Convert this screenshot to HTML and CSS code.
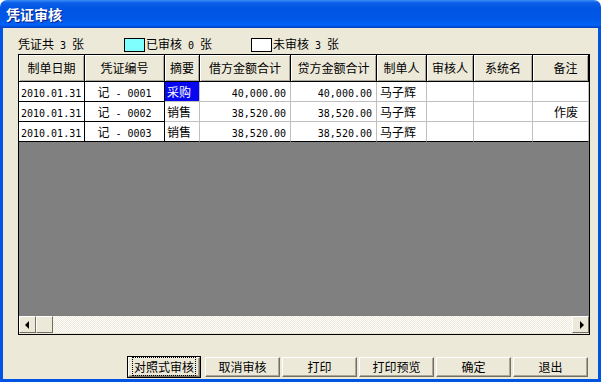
FILE: index.html
```html
<!DOCTYPE html>
<html lang="zh-CN">
<head>
  <meta charset="UTF-8">
  <title>凭证审核</title>
  <link rel="stylesheet" href="styles.css">
</head>
<body>
  <div class="window">
    <div class="titlebar">凭证审核</div>
    <div class="frame">
      <div class="summary">
        <span class="total">凭证共<span class="n"> 3 </span>张</span>
        <span class="legend"><i class="swatch done"></i><span>已审核<span class="n"> 0 </span>张</span></span>
        <span class="legend"><i class="swatch todo"></i><span>未审核<span class="n"> 3 </span>张</span></span>
      </div>

      <div class="grid">
        <div class="row head">
          <div class="c">制单日期</div>
          <div class="c">凭证编号</div>
          <div class="c">摘要</div>
          <div class="c">借方金额合计</div>
          <div class="c">贷方金额合计</div>
          <div class="c">制单人</div>
          <div class="c">审核人</div>
          <div class="c">系统名</div>
          <div class="c note">备注</div>
        </div>
        <div class="row">
          <div class="c fix"><span class="n">2010.01.31</span></div>
          <div class="c fix mid">记<span class="n"> - 0001</span></div>
          <div class="c sel">采购</div>
          <div class="c amt"><span class="n">40,000.00</span></div>
          <div class="c amt"><span class="n">40,000.00</span></div>
          <div class="c who">马子辉</div>
          <div class="c"></div>
          <div class="c"></div>
          <div class="c note"></div>
        </div>
        <div class="row">
          <div class="c fix"><span class="n">2010.01.31</span></div>
          <div class="c fix mid">记<span class="n"> - 0002</span></div>
          <div class="c">销售</div>
          <div class="c amt"><span class="n">38,520.00</span></div>
          <div class="c amt"><span class="n">38,520.00</span></div>
          <div class="c who">马子辉</div>
          <div class="c"></div>
          <div class="c"></div>
          <div class="c note">作废</div>
        </div>
        <div class="row last">
          <div class="c fix"><span class="n">2010.01.31</span></div>
          <div class="c fix mid">记<span class="n"> - 0003</span></div>
          <div class="c">销售</div>
          <div class="c amt"><span class="n">38,520.00</span></div>
          <div class="c amt"><span class="n">38,520.00</span></div>
          <div class="c who">马子辉</div>
          <div class="c"></div>
          <div class="c"></div>
          <div class="c note"></div>
        </div>
        <div class="empty"></div>
        <div class="hscroll">
          <div class="sbtn"><i class="arrow left"></i></div>
          <div class="thumb"></div>
          <div class="track"></div>
          <div class="sbtn"><i class="arrow right"></i></div>
        </div>
      </div>

      <div class="buttons">
        <button class="default"><span>对照式审核</span></button>
        <button>取消审核</button>
        <button>打印</button>
        <button>打印预览</button>
        <button>确定</button>
        <button>退出</button>
      </div>
    </div>
  </div>
</body>
</html>
```

FILE: styles.css
```css
body {
  margin: 0;
  background: #fff;
  font-family: "Noto Sans CJK SC", sans-serif;
  font-size: 12px;
  color: #000;
}

.window {
  width: 601px;
  height: 382px;
  display: flex;
  flex-direction: column;
}

.titlebar {
  height: 28px;
  line-height: 28px;
  padding-left: 6px;
  color: #fff;
  font-weight: bold;
  font-size: 14px;
  text-shadow: 1px 1px 0 #0a1e8a;
  border-radius: 7px 7px 0 0;
  background: linear-gradient(to bottom, #3c8cf7 0, #0a5ee8 3px, #0054e3 9px, #0058e8 20px, #0064f8 25px, #0048d0 27px, #003cc0 28px);
}

.frame {
  flex: 1;
  background: #ece9d8;
  border: 3px solid #0054e3;
  border-top: 0;
  padding: 7px 0 0 15px;
}

.summary {
  height: 19px;
  display: flex;
  align-items: center;
  line-height: 14px;
}

.n {
  font-family: "DejaVu Sans Mono", monospace;
  font-size: 10px;
  white-space: pre;
}

.total { width: 106px; }

.legend {
  display: flex;
  align-items: center;
  width: 127px;
}

.swatch {
  width: 19px;
  height: 12px;
  border: 1px solid #000;
  margin-right: 1px;
}

.swatch.done { background: #80ffff; }
.swatch.todo { background: #fff; }

.grid {
  width: 570px;
  height: 279px;
  border: 1px solid #000;
  display: flex;
  flex-direction: column;
  background: #808080;
}

.row {
  display: grid;
  grid-template-columns: 66px 80px 35px 91px 86px 50px 47px 59px 56px;
  height: 20px;
  background: #fff;
}

.c {
  box-sizing: border-box;
  border-right: 1px solid #c0c0c0;
  border-bottom: 1px solid #c0c0c0;
  padding: 0 2px;
  line-height: 19px;
  white-space: nowrap;
  overflow: hidden;
}

.row.last .c { border-bottom-color: #000; }

.c.fix {
  border-right-color: #000;
  border-bottom-color: #000;
}

.c.mid { text-align: center; }
.c.amt { text-align: right; padding-right: 4px; }
.c.who { padding-left: 3px; }
.c.note { text-align: right; padding-right: 10px; }

.c.sel {
  background: #0808f0;
  color: #fff;
}

.head {
  height: 27px;
  background: #ece9d8;
}

.head .c {
  text-align: center;
  line-height: 26px;
  border-right-color: #000;
  border-bottom-color: #000;
  box-shadow: inset 1px 1px 0 #fff, inset -1px -1px 0 #aca899;
}

.head .c.note { padding: 0 0 0 10px; }

.empty { flex: 1; }

.hscroll {
  height: 17px;
  display: flex;
  background: repeating-conic-gradient(#fff 0 25%, #ece9d8 0 50%) 0 0 / 2px 2px;
  border-bottom: 1px solid #ece9d8;
}

.sbtn, .thumb {
  width: 17px;
  height: 17px;
  box-sizing: border-box;
  background: #ece9d8;
  border: 1px solid;
  border-color: #fff #716f64 #716f64 #fff;
  display: flex;
  align-items: center;
  justify-content: center;
}

.track { flex: 1; }

.arrow {
  width: 0;
  height: 0;
  border-top: 4px solid transparent;
  border-bottom: 4px solid transparent;
}

.arrow.left { border-right: 4px solid #000; margin-right: 2px; }
.arrow.right { border-left: 4px solid #000; margin-left: 2px; }

.buttons {
  display: flex;
  gap: 2px;
  margin: 22px 0 0 110px;
}

button {
  width: 75px;
  height: 20px;
  padding: 0;
  font: inherit;
  background: #ece9d8;
  border: 1px solid;
  border-color: #fff #716f64 #716f64 #fff;
  box-shadow: inset -1px -1px 0 #aca899;
  line-height: 16px;
}

button.default {
  width: 72px;
  margin-right: 3px;
  outline: 1px solid #000;
  outline-offset: 0;
}

button.default span {
  border: 1px dotted #000;
  padding: 0 1px;
}
```
